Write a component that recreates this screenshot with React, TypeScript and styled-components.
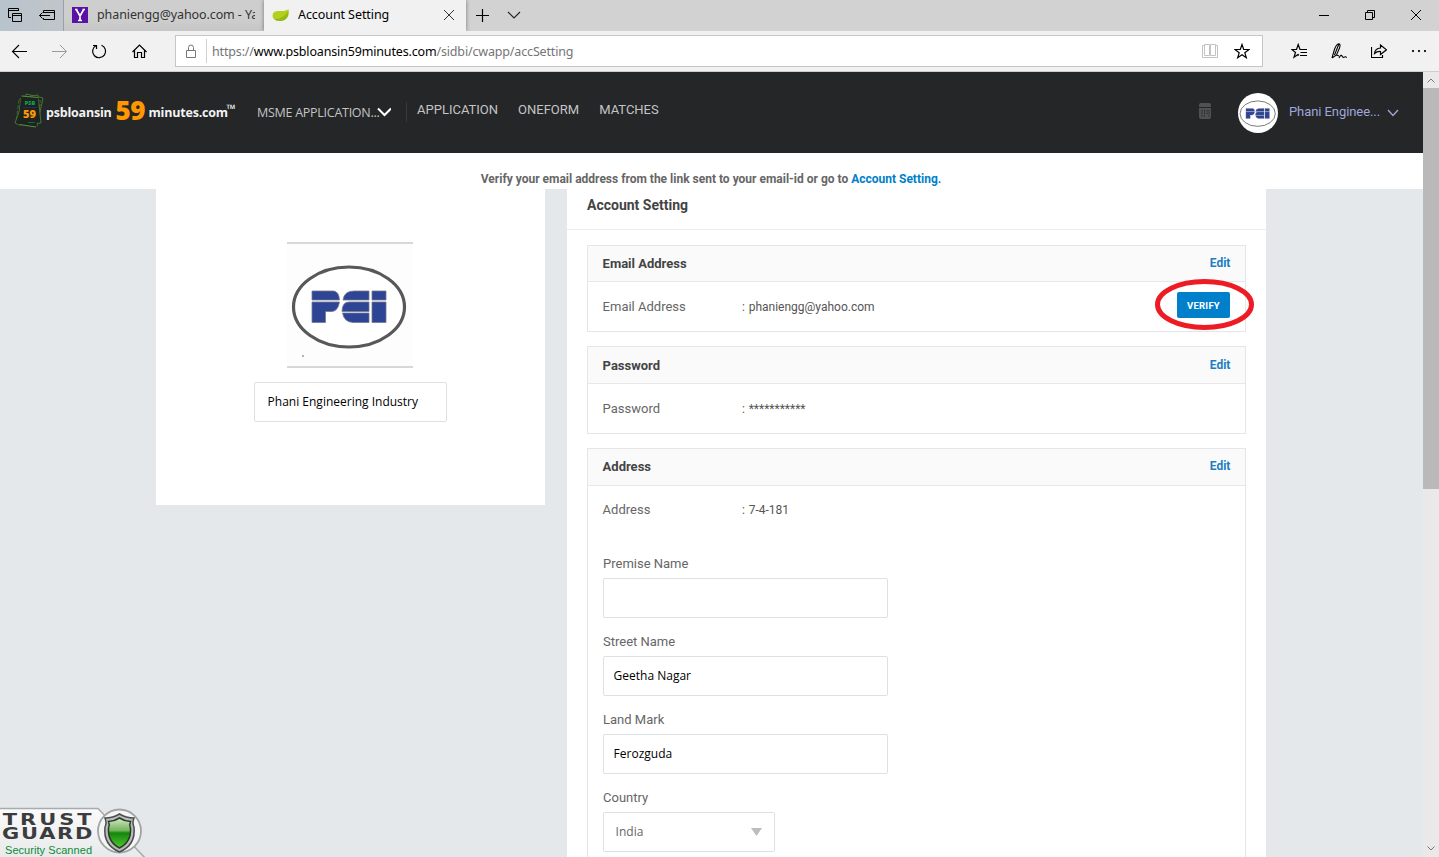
import React from "react";
import styled, { createGlobalStyle } from "styled-components";

const Global = createGlobalStyle`
  * { box-sizing: border-box; }
  body { margin: 0; background: #e4e8eb; overflow: hidden; font-family: Roboto, "Liberation Sans", sans-serif; }
  svg { display: block; flex: none; }
`;

const Window = styled.div`
  position: relative;
  width: 1439px;
  height: 857px;
  overflow: hidden;
  display: flex;
  flex-direction: column;
`;

/* ---------- browser chrome ---------- */
const TabStrip = styled.div`
  height: 31px;
  display: flex;
  background: #d2d2d2;
  font-family: "Noto Sans", sans-serif;
  flex: none;
`;
const TabTools = styled.div`
  width: 63px;
  display: flex;
  align-items: center;
  gap: 16px;
  padding: 0 0 1px 7px;
  background: linear-gradient(90deg, #b9c3cc, #c0c6cb);
`;
const Tab = styled.div<{ $active?: boolean }>`
  width: ${(p) => (p.$active ? 202 : 201)}px;
  display: flex;
  align-items: center;
  padding: 0 9px 1px 8px;
  background: ${(p) => (p.$active ? "#f1f1f1" : "linear-gradient(#cecece 60%, #c6c6c6)")};
  border-left: ${(p) => (p.$active ? "0" : "1px solid #98a0a8")};
  box-shadow: ${(p) => (p.$active ? "0 0 4px rgba(0,0,0,.45)" : "none")};
  clip-path: ${(p) => (p.$active ? "inset(0 -5px 0 -5px)" : "none")};
`;
const TabTitle = styled.span<{ $gap: number; $ls: number; $color: string }>`
  flex: 1;
  min-width: 0;
  margin-left: ${(p) => p.$gap}px;
  overflow: hidden;
  white-space: nowrap;
  font-size: 12.5px;
  line-height: 20px;
  letter-spacing: ${(p) => p.$ls}px;
  color: ${(p) => p.$color};
`;
const StripButtons = styled.div`
  flex: 1;
  display: flex;
  align-items: center;
  gap: 18px;
  padding: 0 0 1px 9px;
`;
const WindowButtons = styled.div`
  display: flex;
  align-items: center;
  gap: 36px;
  padding: 0 18px 1px 0;
`;
const NavBar = styled.div`
  height: 41px;
  flex: none;
  display: flex;
  align-items: center;
  background: #f1f1f1;
  border-bottom: 1px solid #cdcdcd;
`;
const NavButtons = styled.div`
  width: 175px;
  display: flex;
  align-items: center;
  gap: 24px;
  padding-left: 11px;
`;
const AddressBar = styled.div`
  width: 1088px;
  height: 32px;
  display: flex;
  align-items: center;
  padding: 0 12px 0 8px;
  background: #fff;
  border: 1px solid #c6c6c6;
`;
const AddressSplit = styled.div`
  width: 1px;
  height: 24px;
  margin: 0 5px 0 8px;
  background: #d0d0d0;
`;
const Url = styled.div`
  flex: 1;
  font-family: "Noto Sans", sans-serif;
  font-size: 12.5px;
  line-height: 20px;
  letter-spacing: -0.16px;
  margin-top: 1px;
  color: #757575;
  b { font-weight: 400; color: #000; }
`;
const IconGroup = styled.div<{ $gap: number; $pad?: number }>`
  display: flex;
  align-items: center;
  gap: ${(p) => p.$gap}px;
  padding-left: ${(p) => p.$pad ?? 0}px;
`;

/* ---------- page ---------- */
const Viewport = styled.div`
  flex: 1;
  min-height: 0;
  display: flex;
`;
const Page = styled.div`
  width: 1423px;
  overflow: hidden;
`;
const Header = styled.header`
  height: 81px;
  display: flex;
  background: #252628;
`;
const Logo = styled.div`
  display: flex;
  align-items: flex-start;
  width: 257px;
  padding: 20px 0 0 13px;
  font-family: "Open Sans", sans-serif;
  font-weight: 700;
  color: #f3f3f3;
  white-space: nowrap;
`;
const LogoWord = styled.span<{ $size: number; $ls: number; $w: number; $top: number; $color?: string }>`
  width: ${(p) => p.$w}px;
  margin-top: ${(p) => p.$top}px;
  font-size: ${(p) => p.$size}px;
  font-weight: ${(p) => (p.$color ? 800 : 700)};
  line-height: 20px;
  letter-spacing: ${(p) => p.$ls}px;
  color: ${(p) => p.$color ?? "#f3f3f3"};
`;
const AppPicker = styled.div`
  display: flex;
  align-items: center;
  width: 150px;
  height: 20px;
  margin-top: 30px;
  border-right: 1px solid #38393b;
  font-family: "Open Sans", sans-serif;
  font-size: 12.5px;
  letter-spacing: -0.27px;
  color: #c4c4c4;
  white-space: nowrap;
`;
const PickerLabel = styled.span`width: 120px;`;
const Menu = styled.nav`
  flex: 1;
  display: flex;
  gap: 20px;
  padding: 28px 0 0 10px;
  font-size: 13px;
  line-height: 20px;
  color: #c4c4c4;
`;
const Account = styled.div`
  display: flex;
  align-items: center;
  width: 224px;
  height: 81px;
  color: #9fa8da;
  font-size: 13px;
`;
const Avatar = styled.div`
  display: flex;
  align-items: center;
  justify-content: center;
  width: 40px;
  height: 40px;
  margin: 0 11px 0 27px;
  border-radius: 50%;
  background: #fff;
`;
const AccountName = styled.span`
  width: 98px;
  line-height: 20px;
  margin-top: -2px;
  letter-spacing: -0.08px;
`;
const Notice = styled.div`
  height: 36px;
  padding: 16px 1px 0 0;
  background: #fff;
  text-align: center;
  font-size: 12px;
  font-weight: 700;
  line-height: 20px;
  color: #666;
  a { color: #0080cb; }
`;
const Columns = styled.div`
  display: flex;
  align-items: flex-start;
  gap: 22px;
  padding-left: 156px;
  height: 668px;
  background: #e4e8eb;
`;
const ProfileCard = styled.section`
  width: 389px;
  height: 316px;
  display: flex;
  flex-direction: column;
  align-items: center;
  padding-top: 53px;
  background: #fff;
`;
const ProfileImage = styled.div`
  width: 126px;
  height: 126px;
  margin: 0 0 14px -1px;
  overflow: hidden;
  background: #fdfdfd;
  border: solid #d8d8d8;
  border-width: 2px 0;
`;
const Field = styled.div<{ $w: number; $pad: number; $color?: string; $ls?: number }>`
  display: flex;
  align-items: center;
  justify-content: space-between;
  width: ${(p) => p.$w}px;
  height: 40px;
  padding: 0 12px 0 ${(p) => p.$pad}px;
  border: 1px solid #dce1e4;
  border-radius: 2px;
  background: #fff;
  font-family: "Open Sans", sans-serif;
  font-size: 12px;
  line-height: 20px;
  letter-spacing: ${(p) => p.$ls ?? 0}px;
  color: ${(p) => p.$color ?? "#000"};
`;
const Settings = styled.section`
  width: 699px;
  height: 700px;
  background: #fff;
`;
const SettingsTitle = styled.h1`
  height: 41px;
  margin: 0 0 15px;
  padding: 6px 0 0 20px;
  border-bottom: 1px solid #ebeced;
  font-size: 14px;
  font-weight: 700;
  line-height: 20px;
  color: #444;
`;
const Panel = styled.div<{ $h: number }>`
  width: 659px;
  height: ${(p) => p.$h}px;
  margin: 0 0 14px 20px;
  border: 1px solid #e4e6e8;
`;
const PanelHead = styled.div<{ $h: number; $top?: number }>`
  display: flex;
  justify-content: space-between;
  height: ${(p) => p.$h}px;
  padding: ${(p) => p.$top ?? 7}px 14.6px 0 14.6px;
  border-bottom: 1px solid #e6e8ea;
  background: #fafafa;
  font-size: 13px;
  font-weight: 700;
  line-height: 21px;
  color: #444;
`;
const EditLink = styled.a`
  font-size: 12px;
  line-height: 20px;
  color: #1b7fc0;
`;
const PanelRow = styled.div<{ $h?: number }>`
  display: flex;
  align-items: center;
  height: ${(p) => p.$h ?? 49}px;
  padding: 0 15px 0 14.6px;
  font-size: 13px;
  color: #666;
`;
const RowLabel = styled.span`width: 139.300px;`;
const RowValue = styled.span`
  flex: 1;
  font-size: 12px;
  word-spacing: 0.9px;
  color: #555;
`;
const VerifyButton = styled.button`
  width: 53px;
  height: 26px;
  margin-top: -3px;
  padding: 1px 0 0;
  border: 0;
  border-radius: 2px;
  background: #0080cb;
  color: #fff;
  font: 700 9.5px/25px Roboto, sans-serif;
  letter-spacing: 0.25px;
`;
const FieldGroup = styled.div<{ $first?: boolean }>`
  margin: ${(p) => (p.$first ? 21 : 14)}px 0 0 15px;
  font-size: 13px;
  line-height: 20px;
  color: #666;
`;
const FieldLabel = styled.div`margin-bottom: 4px;`;
const ScrollBar = styled.div`
  width: 16px;
  display: flex;
  flex-direction: column;
  background: #e9e9e9;
`;
const ScrollArrow = styled.div<{ $down?: boolean }>`
  height: 16px;
  margin-top: ${(p) => (p.$down ? "auto" : 0)};
  display: flex;
  align-items: center;
  justify-content: center;
  transform: ${(p) => (p.$down ? "rotate(180deg)" : "none")};
`;
const ScrollThumb = styled.div`
  height: 401px;
  background: #b9b9b9;
`;
const Highlight = styled.svg`
  position: absolute;
  left: 1153px;
  top: 277px;
`;
const TrustBadge = styled.div`
  position: absolute;
  left: 0;
  bottom: 0;
  width: 145px;
  height: 50px;
`;

const PeiMark = ({ size, stroke }: { size: number; stroke: number }) => (
  <svg width={size} height={size} viewBox={size > 60 ? "0 2 126 126" : "0 0 126 126"}>
    <ellipse cx="62" cy="65" rx="55.500" ry="40" fill="#fff" stroke="#58585a" strokeWidth={stroke} />
    <g fill="#2e4494" stroke="#73798c" strokeWidth=".8">
      <path d="M25 49H47Q52 50 52.500 58H25Z" />
      <path d="M25 60H52.500Q51 69 45 69.500H38.500V80.500H25Z" />
      <path d="M56 58Q57 49 67 49H82V58Z" />
      <path d="M55 69.500Q55 60 62 60H82V69.500H55Z" />
      <path d="M55.500 71H82V80.500H66Q57 80 55.500 71Z" />
      <path d="M85 49H99V58H85ZM85 60H99V80.500H85Z" />
    </g>
    <circle cx="16" cy="114" r=".8" fill="#555" />
  </svg>
);

const Line = ({ w, h, d, sw = 1, color = "#000", style }: {
  w: number; h: number; d: string; sw?: number; color?: string; style?: React.CSSProperties;
}) => (
  <svg width={w} height={h} viewBox={`0 0 ${w} ${h}`} fill="none" stroke={color} strokeWidth={sw} style={style}>
    <path d={d} />
  </svg>
);

const STAR = "M8 1.500L9.700 6.500H15L10.800 9.700L12.300 14.700L8 11.700L3.700 14.700L5.200 9.700L1 6.500H6.300Z";

const BanknotesLogo = () => (
  <svg width="33" height="38" viewBox="0 0 33 38" fill="#1d2420" stroke="#4f7d35" strokeWidth=".9">
    <path d="M13 2L30 6L24 34L7 30Z" stroke="#507d38" />
    <path d="M6 8L10 4L28 9L22 34L3 30Z" stroke="#45692f" strokeDasharray="4 1.500" />
    <path d="M8 6L25 3L28 31L6 33L2 31L6 20Z" stroke="#4c7a35" />
    <path d="M8.500 4L25 5.500L23 35L6.500 32.500Z" stroke="#1d2420" />
    <path d="M8.500 4L25 5.500M6.500 32.500L23 35" stroke="#639c45" />
    <text x="17" y="13" textAnchor="middle" fill="#12a14a" stroke="none" fontSize="5.500" fontWeight="800" fontFamily="Open Sans">PSB</text>
    <path d="M10 15.500H24" stroke="#29296b" />
    <text x="16.500" y="26" textAnchor="middle" fill="#ff9800" stroke="none" fontSize="11" fontWeight="800" fontFamily="Open Sans">59</text>
    <path d="M15 30.500H22" stroke="#16723a" />
  </svg>
);

const TrustGuard = () => (
  <svg width="145" height="50" viewBox="0 0 145 50">
    <defs>
      <linearGradient id="shield" x1="0" y1="0" x2="0" y2="1">
        <stop offset="0" stopColor="#d5e8ca" />
        <stop offset=".42" stopColor="#72b45a" />
        <stop offset=".5" stopColor="#14860c" />
        <stop offset="1" stopColor="#50c832" />
      </linearGradient>
      <linearGradient id="plate" x1="0" y1="0" x2="0" y2="1">
        <stop offset="0" stopColor="#fafafa" />
        <stop offset="1" stopColor="#e8e9ea" />
      </linearGradient>
    </defs>
    <path d="M-2 1.500H98L146 52H-2Z" fill="url(#plate)" stroke="#a8abad" strokeWidth="1.500" />
    <circle cx="119.500" cy="24" r="21.500" fill="#f5f5f5" stroke="#a2a4a6" strokeWidth="1.800" />
    <path d="M119.500 7Q126 11 134 11Q132 16 134 20Q136 38 119.500 45Q103 38 105 20Q107 16 105 11Q113 11 119.500 7Z" fill="#b9bbbc" stroke="#4a4c4e" strokeWidth="1.500" />
    <path d="M119.500 11Q125 14.500 130.500 14.500Q129 18 130.500 21Q131.500 35 119.500 41Q107.500 35 108.500 21Q110 18 108.500 14.500Q114 14.500 119.500 11Z" fill="url(#shield)" stroke="#263d22" strokeWidth="1.500" />
    <g fontFamily="DejaVu Sans" fontWeight="700" fontSize="15" fill="#3c3c3e" transform="scale(1.4 1)">
      <text x="2" y="18.500" textLength="63.500">TRUST</text>
      <text x="1.500" y="32.500" textLength="64.500">GUARD</text>
    </g>
    <text x="5" y="47" textLength="87" fontFamily="Liberation Sans" fontSize="11" fill="#0b8a3a">Security Scanned</text>
  </svg>
);

function Browser() {
  return (
    <>
      <TabStrip>
        <TabTools>
          <Line w={16} h={16} d="M4 10.500H1.500V1.500H11.500V4M1.500 3.500H11.500M5.500 6.500H14.500V14.500H5.500ZM5.500 8.500H14.500" />
          <Line w={16} h={16} d="M4.500 6V3.500H15.500V12.500H4.500V11M4.500 5.500H15.500M11 8.500H.5M3.500 5.500L.5 8.500L3.500 11.500" />
        </TabTools>
        <Tab>
          <svg width="16" height="16" viewBox="0 0 16 16">
            <path fill="#5a12a5" d="M0 0H16V16H0Z" />
            <path d="M3 2.500H5.500M10.500 2.500H13M4.300 2.500L8 9L11.700 2.500M8 8.500V13.500M6 13.500H10" stroke="#fff" strokeWidth="1.700" fill="none" />
          </svg>
          <TabTitle $gap={9} $ls={-0.1} $color="#333">phaniengg@yahoo.com - Ya</TabTitle>
        </Tab>
        <Tab $active>
          <svg width="18" height="16" viewBox="0 0 18 16">
            <path d="M1 11Q-1 4 7 4Q14 4.500 16.500 2Q18 13 9 14Q4 14.500 1 11Z" fill="#b6cf1d" />
            <path d="M2 12Q10 13 16.500 4Q17 13 9 14Q4 14.500 2 12Z" fill="#95b81b" />
          </svg>
          <TabTitle $gap={8} $ls={-0.08} $color="#000">Account Setting</TabTitle>
          <Line w={12} h={12} d="M1 1L11 11M11 1L1 11" color="#333" style={{ marginRight: 2 }} />
        </Tab>
        <StripButtons>
          <Line w={14} h={14} d="M7.500 1V14M1 7.500H14" sw={1.2} />
          <Line w={14} h={8} d="M1 1L7 7L13 1" sw={1.1} color="#222" />
        </StripButtons>
        <WindowButtons>
          <Line w={10} h={10} d="M0 5.500H10" />
          <Line w={10} h={10} d="M.5 2.500H7.500V9.500H.5ZM2.500 2.500V.5H9.500V7.500H7.500" />
          <Line w={10} h={10} d="M0 0L10 10M10 0L0 10" />
        </WindowButtons>
      </TabStrip>
      <NavBar>
        <NavButtons>
          <Line w={16} h={16} d="M16 8.500H1.500M8 2L1.500 8.500L8 15" sw={1.1} />
          <Line w={16} h={16} d="M1 8.500H15.500M9 2L15.500 8.500L9 15" color="#999" />
          <Line w={16} h={16} d="M4.700 2.700A6.500 6.500 0 1 0 10.500 2.200M2 2.500H5.500V6" sw={1.2} />
          <Line w={16} h={16} d="M1.500 9L8.500 2L15.500 9M3.500 7.500V14.500H6.500V9.500H10.500V14.500H13.500V7.500" sw={1.2} />
        </NavButtons>
        <AddressBar>
          <Line w={14} h={16} d="M2.500 7.500H11.500V14.500H2.500ZM4.500 7V4.500A2.500 2.500 0 0 1 9.500 4.500V7" color="#777" />
          <AddressSplit />
          <Url>https://<b>www.psbloansin59minutes.com</b>/sidbi/cwapp/accSetting</Url>
          <IconGroup $gap={16}>
            <Line w={16} h={16} d="M2.500 2.500H.5V14.500H15.500V2.500H13.500M2.500 1.500H7.500V12.500H2.500ZM8.500 1.500H13.500V12.500H8.500Z" color="#c2c2c2" />
            <Line w={16} h={16} d={STAR} sw={1.2} />
          </IconGroup>
        </AddressBar>
        <IconGroup $gap={24} $pad={28}>
          <Line w={16} h={16} d="M10 6.500H9L7.200 1.500L5.500 6.500H.8L4.500 9.500L3 14.200L7 11.500L8 12.300M9 6.500H16M9.500 9.500H16M9 12.500H16" sw={1.2} />
          <Line w={16} h={16} d="M1 15L3 8Q5 1 8 .8Q9.800 1 8.500 5L5.500 12L1 15M8 .8L3.500 12M5.500 12L8 13M8 15Q10 11 11 13Q12 15 13.500 14Q14.500 13.200 15.800 14.500" sw={1.1} />
          <Line w={16} h={16} d="M.5 4V14.500H11.500V12M3.500 10.500Q4 5.500 9.500 5V2L15.500 6.800L9.500 11.500V8.500Q6 8.200 3.500 10.500Z" sw={1.2} />
          <svg width="16" height="4" viewBox="0 0 16 4"><path d="M1 1H3V3H1ZM7 1H9V3H7ZM13 1H15V3H13Z" fill="#222" /></svg>
        </IconGroup>
      </NavBar>
    </>
  );
}

export default function App() {
  return (
    <Window>
      <Global />
      <Browser />
      <Viewport>
        <Page>
          <Header>
            <Logo>
              <BanknotesLogo />
              <LogoWord $size={12.5} $ls={-0.2} $w={69.5} $top={11}>psbloansin</LogoWord>
              <LogoWord $size={26} $ls={-0.5} $w={33} $top={8} $color="#ff9800">59</LogoWord>
              <LogoWord $size={12.5} $ls={-0.2} $w={78} $top={11}>minutes.com</LogoWord>
              <LogoWord $size={12} $ls={0} $w={10} $top={7}>™</LogoWord>
            </Logo>
            <AppPicker>
              <PickerLabel>MSME APPLICATION...</PickerLabel>
              <Line w={14} h={10} d="M1 1.500L7.500 8L14 1.500" sw={2} color="#fff" />
            </AppPicker>
            <Menu><span>APPLICATION</span><span>ONEFORM</span><span>MATCHES</span></Menu>
            <Account>
              <svg width="12" height="18" viewBox="0 0 12 18" style={{ marginTop: -3 }}>
                <path d="M0 5V3Q0 1 2 1H10Q12 1 12 3V5ZM0 6H12V15Q12 17 10 17H2Q0 17 0 15Z" fill="#505153" />
                <path d="M3 8V15M5.500 8V15M8 8V13M10 8V15" stroke="#252628" strokeDasharray="1.500 1" />
              </svg>
              <Avatar><PeiMark size={40} stroke={2.5} /></Avatar>
              <AccountName>Phani Enginee...</AccountName>
              <Line w={12} h={8} d="M1 1L6 6.500L11 1" sw={1.3} color="#9fa8da" />
            </Account>
          </Header>
          <Notice>Verify your email address from the link sent to your email-id or go to <a>Account Setting.</a></Notice>
          <Columns>
            <ProfileCard>
              <ProfileImage><PeiMark size={126} stroke={3.2} /></ProfileImage>
              <Field $w={193} $pad={12.6}>Phani Engineering Industry</Field>
            </ProfileCard>
            <Settings>
              <SettingsTitle>Account Setting</SettingsTitle>
              <Panel $h={87}>
                <PanelHead $h={36}>Email Address<EditLink>Edit</EditLink></PanelHead>
                <PanelRow>
                  <RowLabel>Email Address</RowLabel>
                  <RowValue>: phaniengg@yahoo.com</RowValue>
                  <VerifyButton>VERIFY</VerifyButton>
                </PanelRow>
              </Panel>
              <Panel $h={88}>
                <PanelHead $h={37} $top={8}>Password<EditLink>Edit</EditLink></PanelHead>
                <PanelRow><RowLabel>Password</RowLabel><RowValue>: ***********</RowValue></PanelRow>
              </Panel>
              <Panel $h={480}>
                <PanelHead $h={37}>Address<EditLink>Edit</EditLink></PanelHead>
                <PanelRow $h={47}><RowLabel>Address</RowLabel><RowValue>: 7-4-181</RowValue></PanelRow>
                <FieldGroup $first><FieldLabel>Premise Name</FieldLabel><Field $w={285} $pad={9.6} /></FieldGroup>
                <FieldGroup><FieldLabel>Street Name</FieldLabel><Field $w={285} $pad={9.6}>Geetha Nagar</Field></FieldGroup>
                <FieldGroup><FieldLabel>Land Mark</FieldLabel><Field $w={285} $pad={9.6}>Ferozguda</Field></FieldGroup>
                <FieldGroup>
                  <FieldLabel>Country</FieldLabel>
                  <Field $w={172} $pad={11.6} $color="#666">
                    India
                    <svg width="11" height="8" viewBox="0 0 11 8"><path d="M0 0H11L5.500 8Z" fill="#bdbdbd" /></svg>
                  </Field>
                </FieldGroup>
              </Panel>
            </Settings>
          </Columns>
        </Page>
        <ScrollBar>
          <ScrollArrow><Line w={8} h={5} d="M.5 4.500L4 1L7.500 4.500" color="#777" /></ScrollArrow>
          <ScrollThumb />
          <ScrollArrow $down><Line w={8} h={5} d="M.5 4.500L4 1L7.500 4.500" color="#777" /></ScrollArrow>
        </ScrollBar>
      </Viewport>
      <Highlight width="102" height="54" viewBox="0 0 102 54">
        <ellipse cx="51.500" cy="27.500" rx="47" ry="23" fill="none" stroke="#ed1c24" strokeWidth="5" />
      </Highlight>
      <TrustBadge><TrustGuard /></TrustBadge>
    </Window>
  );
}
